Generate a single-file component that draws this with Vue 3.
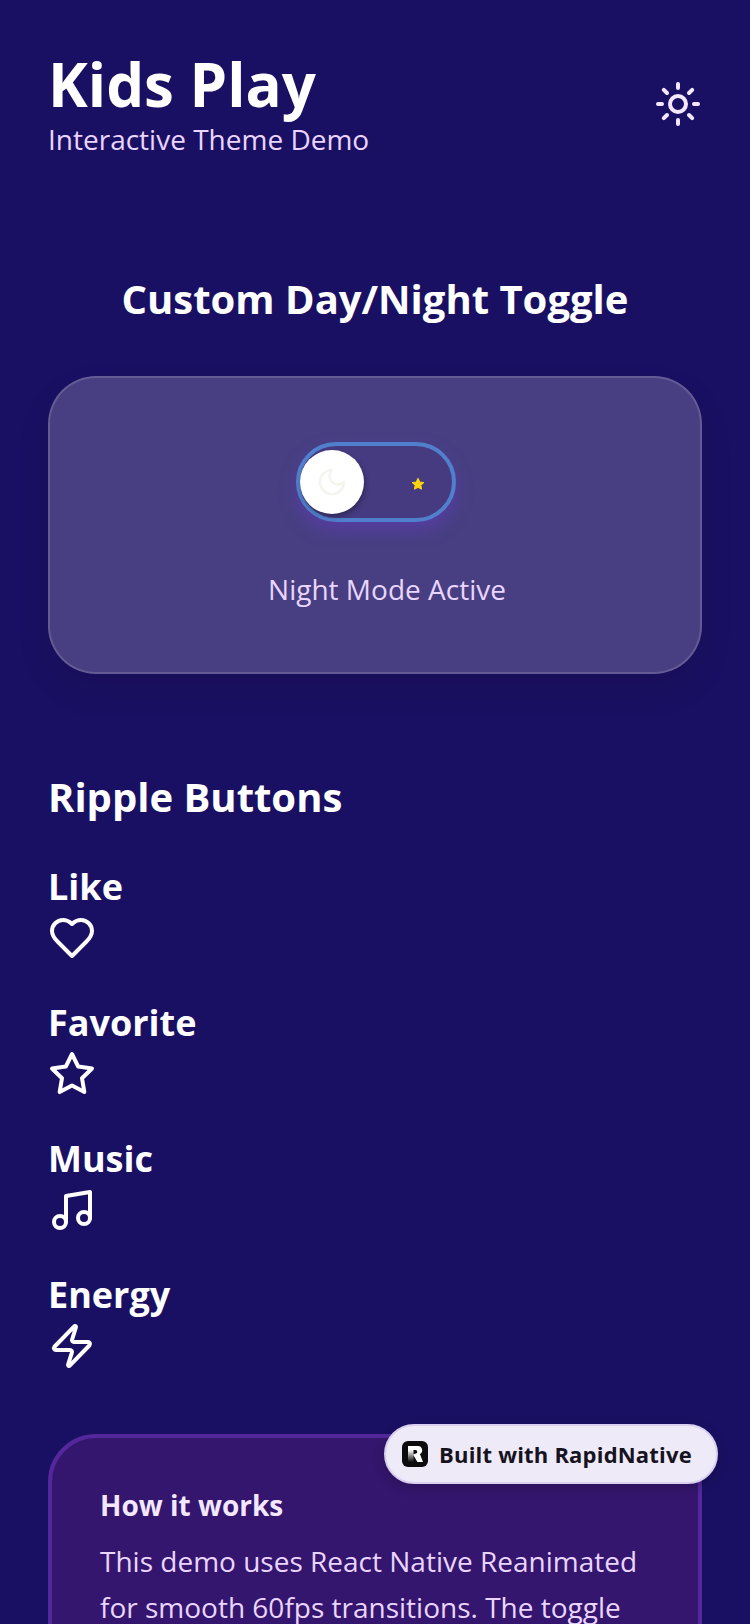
<script setup>
const buttons = [
  { label: 'Like', icon: 'heart' },
  { label: 'Favorite', icon: 'star' },
  { label: 'Music', icon: 'music' },
  { label: 'Energy', icon: 'zap' }
]
</script>

<template>
  <div class="screen">
    <header class="header">
      <div>
        <h1 class="header__title">Kids Play</h1>
        <p class="header__subtitle">Interactive Theme Demo</p>
      </div>
      <svg class="header__sun" viewBox="0 0 48 48" fill="none" stroke="#f3e8ff" stroke-width="4" stroke-linecap="round">
        <circle cx="24" cy="24" r="8" />
        <path d="M24 4v4M24 40v4M4 24h4M40 24h4M9.8 9.8l3.2 3.2M35 35l3.2 3.2M9.8 38.2l3.2-3.2M35 13l3.2-3.2" />
      </svg>
    </header>

    <section class="toggle-section">
      <h2 class="toggle-section__title">Custom Day/Night Toggle</h2>
      <div class="toggle-card">
        <div class="toggle">
          <div class="toggle__knob">
            <svg class="toggle__moon" viewBox="0 0 24 24" fill="none" stroke="#f5f5f0" stroke-width="2" stroke-linecap="round" stroke-linejoin="round">
              <path d="M12 3a6 6 0 0 0 9 9 9 9 0 1 1-9-9Z" />
            </svg>
          </div>
          <svg class="toggle__star" viewBox="0 0 24 24" fill="#fdd50e" stroke="#fdd50e" stroke-width="2" stroke-linejoin="round">
            <path d="M12 2.5l2.9 6 6.6.9-4.8 4.6 1.2 6.5-5.9-3.1-5.9 3.1 1.2-6.5-4.8-4.6 6.6-.9z" />
          </svg>
        </div>
        <p class="toggle-card__label">Night Mode Active</p>
      </div>
    </section>

    <section class="ripple">
      <h2 class="ripple__title">Ripple Buttons</h2>
      <div class="ripple__item" v-for="item in buttons" :key="item.label">
        <p class="ripple__label">{{ item.label }}</p>
        <svg class="ripple__icon" viewBox="0 0 24 24" fill="none" stroke="#fff" stroke-width="2" stroke-linecap="round" stroke-linejoin="round">
          <path v-if="item.icon === 'heart'" d="M19 14c1.49-1.46 3-3.21 3-5.5A5.5 5.5 0 0 0 16.5 3c-1.76 0-3 .5-4.5 2-1.5-1.5-2.74-2-4.5-2A5.5 5.5 0 0 0 2 8.5c0 2.3 1.5 4.05 3 5.5l7 7Z" />
          <path v-if="item.icon === 'star'" d="M12 2l3.09 6.26L22 9.27l-5 4.87 1.18 6.88L12 17.77l-6.18 3.25L7 14.14 2 9.27l6.91-1.01L12 2z" />
          <template v-if="item.icon === 'music'">
            <path d="M9 18V5l12-2v13" />
            <circle cx="6" cy="18" r="3" />
            <circle cx="18" cy="16" r="3" />
          </template>
          <path v-if="item.icon === 'zap'" d="M4 14a1 1 0 0 1-.78-1.63l9.9-10.2a.5.5 0 0 1 .86.46l-1.92 6.02A1 1 0 0 0 13 10h7a1 1 0 0 1 .78 1.63l-9.9 10.2a.5.5 0 0 1-.86-.46l1.92-6.02A1 1 0 0 0 11 14z" />
        </svg>
      </div>
    </section>

    <section class="info">
      <h3 class="info__title">How it works</h3>
      <p class="info__text">This demo uses React Native Reanimated for smooth 60fps transitions. The toggle morphs between day and night with spring physics.</p>
    </section>

    <div class="badge">
      <svg class="badge__logo" viewBox="0 0 26 26">
        <defs>
          <linearGradient id="stem" x1="0" y1="0" x2="0" y2="1">
            <stop offset="0" stop-color="#fff" />
            <stop offset="1" stop-color="#0c0c0e" />
          </linearGradient>
        </defs>
        <rect width="26" height="26" rx="6" fill="#0c0c0e" />
        <path d="M6 9h5.5v12H6z" fill="url(#stem)" />
        <path d="M6 5h10a4.3 4.3 0 0 1 1.9 8.1L21 21h-5.6L11 13.5l3-1a1.8 1.8 0 0 0-.3-3.5H6z" fill="#fff" />
      </svg>
      <span class="badge__text">Built with RapidNative</span>
    </div>
  </div>
</template>

<style>
html, body {
  margin: 0;
  background: #1a1063;
}
</style>

<style scoped>
.screen {
  position: relative;
  width: 750px;
  height: 1624px;
  overflow: hidden;
  background: #1a1063;
  font-family: "Open Sans", sans-serif;
  color: #fff;
}

h1, h2, h3, p {
  margin: 0;
}

.header {
  display: flex;
  justify-content: space-between;
  align-items: center;
  padding: 48px 48px 0;
}

.header__title {
  font-size: 60px;
  line-height: 72px;
  font-weight: 700;
}

.header__subtitle {
  font-size: 28px;
  line-height: 38px;
  color: #e9d5ff;
}

.header__sun {
  width: 48px;
  height: 48px;
  margin-top: 2px;
}

.toggle-section {
  padding: 0 48px;
  margin-top: 113px;
}

.toggle-section__title {
  font-size: 40px;
  line-height: 56px;
  font-weight: 700;
  text-align: center;
}

.toggle-card {
  display: flex;
  flex-direction: column;
  align-items: center;
  box-sizing: border-box;
  height: 298px;
  margin-top: 49px;
  padding-top: 64px;
  background: rgba(255, 255, 255, 0.2);
  border: 2px solid rgba(255, 255, 255, 0.15);
  border-radius: 48px;
  box-shadow: 0 16px 32px rgba(0, 0, 0, 0.1);
}

.toggle {
  position: relative;
  display: flex;
  align-items: center;
  box-sizing: border-box;
  width: 160px;
  height: 80px;
  margin-left: 2px;
  border: 4px solid #5080cc;
  border-radius: 40px;
  box-shadow: 0 8px 16px rgba(100, 60, 190, 0.55);
  background: #463a80;
}

.toggle__knob {
  display: flex;
  align-items: center;
  justify-content: center;
  width: 64px;
  height: 64px;
  border-radius: 50%;
  background: #fff;
  box-shadow: 1px 3px 5px rgba(0, 0, 0, 0.3);
}

.toggle__moon {
  width: 32px;
  height: 32px;
}

.toggle__star {
  position: absolute;
  left: 111px;
  top: 31px;
  width: 14px;
  height: 14px;
}

.toggle-card__label {
  margin-top: 47px;
  margin-left: 24px;
  font-size: 28px;
  line-height: 40px;
  color: #e9d5ff;
}

.ripple {
  padding: 0 48px;
  margin-top: 95px;
}

.ripple__title {
  font-size: 40px;
  line-height: 56px;
  font-weight: 700;
}

.ripple__item {
  margin-top: 36px;
}

.ripple__item + .ripple__item {
  margin-top: 35px;
}

.ripple__label {
  font-size: 36px;
  line-height: 52px;
  font-weight: 700;
}

.ripple__icon {
  display: block;
  width: 48px;
  height: 48px;
  margin-top: 1px;
}

.info {
  box-sizing: border-box;
  margin: 64px 48px 0;
  padding: 47px 48px;
  background: #34166e;
  border: 4px solid #54289c;
  border-radius: 48px;
}

.info__title {
  font-size: 28px;
  line-height: 40px;
  font-weight: 700;
  color: #f3e8ff;
}

.info__text {
  margin-top: 13px;
  font-size: 28px;
  line-height: 46px;
  color: #e9d5ff;
}

.badge {
  position: absolute;
  left: 384px;
  top: 1424px;
  display: flex;
  align-items: center;
  gap: 11px;
  box-sizing: border-box;
  width: 334px;
  height: 60px;
  padding: 0 16px;
  background: #eeeaf8;
  border: 2px solid #d9cff0;
  border-radius: 30px;
  box-shadow: 0 4px 12px rgba(0, 0, 0, 0.2);
}

.badge__logo {
  width: 26px;
  height: 26px;
  flex-shrink: 0;
}

.badge__text {
  font-size: 22px;
  font-weight: 700;
  letter-spacing: 0.2px;
  color: #16131f;
  white-space: nowrap;
}
</style>
